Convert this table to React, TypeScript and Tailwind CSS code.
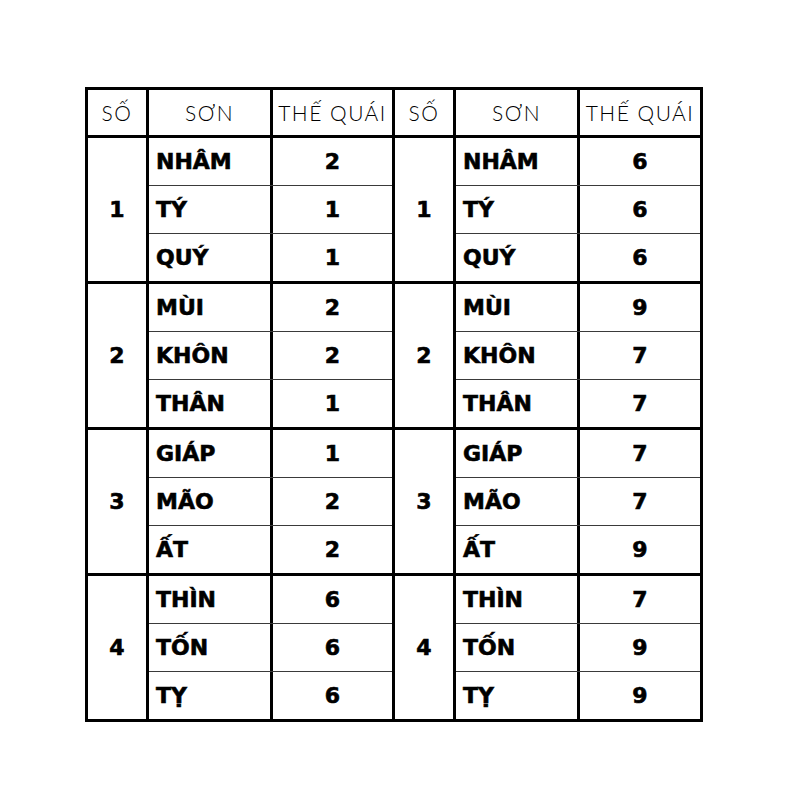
import React from "react";

type Row = { name: string; val: string };
type Group = { so: string; rows: Row[] };

const left: Group[] = [
  { so: "1", rows: [{ name: "NHÂM", val: "2" }, { name: "TÝ", val: "1" }, { name: "QUÝ", val: "1" }] },
  { so: "2", rows: [{ name: "MÙI", val: "2" }, { name: "KHÔN", val: "2" }, { name: "THÂN", val: "1" }] },
  { so: "3", rows: [{ name: "GIÁP", val: "1" }, { name: "MÃO", val: "2" }, { name: "ẤT", val: "2" }] },
  { so: "4", rows: [{ name: "THÌN", val: "6" }, { name: "TỐN", val: "6" }, { name: "TỴ", val: "6" }] },
];
const right: Group[] = [
  { so: "1", rows: [{ name: "NHÂM", val: "6" }, { name: "TÝ", val: "6" }, { name: "QUÝ", val: "6" }] },
  { so: "2", rows: [{ name: "MÙI", val: "9" }, { name: "KHÔN", val: "7" }, { name: "THÂN", val: "7" }] },
  { so: "3", rows: [{ name: "GIÁP", val: "7" }, { name: "MÃO", val: "7" }, { name: "ẤT", val: "9" }] },
  { so: "4", rows: [{ name: "THÌN", val: "7" }, { name: "TỐN", val: "9" }, { name: "TỴ", val: "9" }] },
];

const bodyText = "text-[22px] font-bold [-webkit-text-stroke:0.6px_black]";

function Half({ g, nameW, valW }: { g: Group; nameW: string; valW: string }) {
  return (
    <>
      <div className={`w-[58px] bg-white flex items-center justify-center ${bodyText}`}>{g.so}</div>
      <div className="flex flex-col gap-px bg-[#3a3a3a]">
        {g.rows.map((r, i) => (
          <div key={i} className="flex gap-[3px] bg-black h-[47px]">
            <div className={`${nameW} bg-white flex items-center pl-[7px] ${bodyText}`}>{r.name}</div>
            <div className={`${valW} bg-white flex items-center justify-center ${bodyText}`}>{r.val}</div>
          </div>
        ))}
      </div>
    </>
  );
}

function Head({ w, text }: { w: string; text: string }) {
  return (
    <div className={`${w} bg-white flex items-center justify-center text-[21px] font-light tracking-[1.5px]`} style={{ fontFamily: "Lato, sans-serif" }}>
      {text}
    </div>
  );
}

export default function App() {
  return (
    <div className="w-[787px] h-[800px] bg-white pt-[87px] pl-[85px]" style={{ fontFamily: "'DejaVu Sans', sans-serif" }}>
      <div className="w-[618px] border-[3px] border-black bg-black flex flex-col gap-[3px] text-black">
        <div className="flex gap-[3px] h-[45px]">
          <Head w="w-[58px]" text="SỐ" />
          <Head w="w-[121px]" text="SƠN" />
          <Head w="w-[119px]" text="THẾ QUÁI" />
          <Head w="w-[58px]" text="SỐ" />
          <Head w="w-[121px]" text="SƠN" />
          <Head w="w-[120px]" text="THẾ QUÁI" />
        </div>
        {left.map((g, i) => (
          <div key={i} className="flex gap-[3px] h-[143px]">
            <Half g={g} nameW="w-[121px]" valW="w-[119px]" />
            <Half g={right[i]} nameW="w-[121px]" valW="w-[120px]" />
          </div>
        ))}
      </div>
    </div>
  );
}
